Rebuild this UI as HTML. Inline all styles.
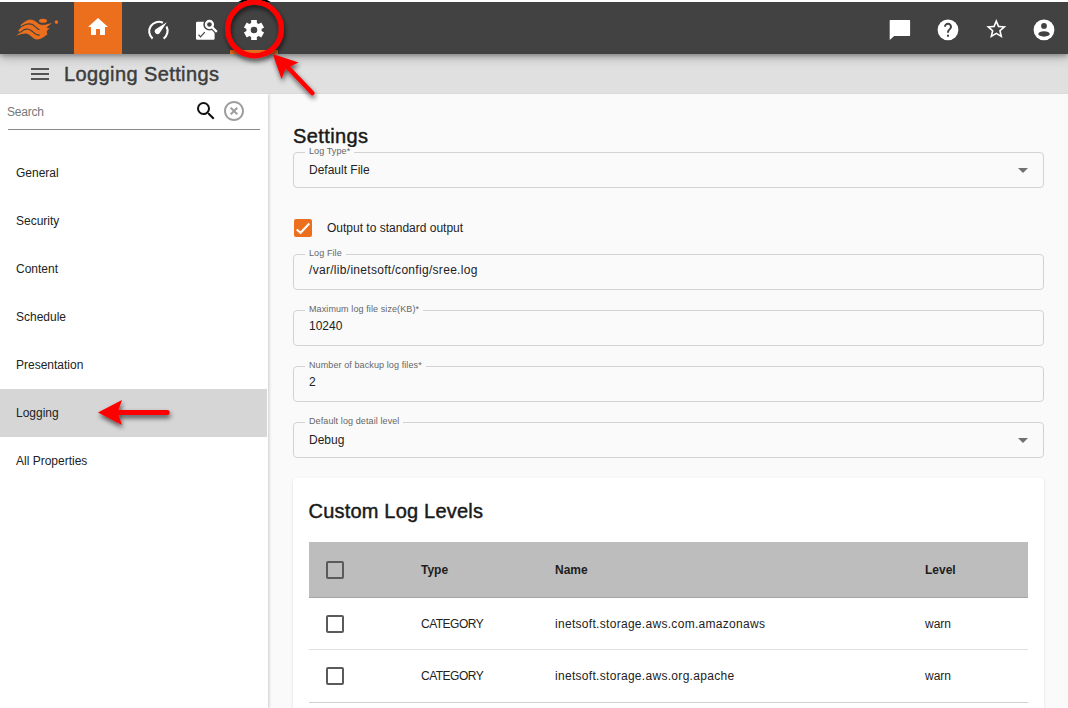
<!DOCTYPE html>
<html><head><meta charset="utf-8">
<style>
*{margin:0;padding:0;box-sizing:border-box}
html,body{width:1068px;height:708px;overflow:hidden;background:#fff;font-family:"Liberation Sans",sans-serif}
.abs{position:absolute}
#tb{position:absolute;left:0;top:2px;width:1068px;height:52px;background:#424242;z-index:3;box-shadow:0 2px 4px rgba(0,0,0,.25),0 4px 10px rgba(0,0,0,.22)}
#home{position:absolute;left:74px;top:0;width:48px;height:52px;background:#ec6f1d}
#ind{position:absolute;left:230px;top:48px;width:48px;height:4px;background:#ec6f1d}
#sub{position:absolute;left:0;top:54px;width:1068px;height:40px;background:#e0e0e0;z-index:2;border-bottom:1px solid #dadada}
#side{position:absolute;left:0;top:94px;width:268px;height:614px;background:#fff;z-index:1;box-shadow:1px 0 3px rgba(0,0,0,.2)}
#main{position:absolute;left:268px;top:94px;width:800px;height:614px;background:#fafafa}
.t{position:absolute;white-space:nowrap;line-height:1}
.item{position:absolute;left:16px;font-size:12px;color:#222}
.field{position:absolute;left:293px;width:751px;height:36px;border:1px solid #d2d2d2;border-radius:4px}
.lab{position:absolute;left:11px;top:-6px;padding:0 4px;background:#fafafa;font-size:9px;color:#666;line-height:1;letter-spacing:0.1px}
.val{position:absolute;left:15px;font-size:12px;color:#222;line-height:1}
.caret{position:absolute;left:724px;top:15px;width:0;height:0;border-left:5px solid transparent;border-right:5px solid transparent;border-top:5px solid #707070}
#card{position:absolute;left:293px;top:478px;width:751px;height:240px;background:#fff;border-radius:4px;box-shadow:0 1px 3px rgba(0,0,0,.12)}
.cb{position:absolute;width:18px;height:18px;border:2px solid #5a5a5a;border-radius:2px}
.th{position:absolute;font-size:12px;font-weight:bold;color:#1e1e1e;line-height:1}
.td{position:absolute;font-size:12px;color:#222;line-height:1}
</style></head><body>
<div id="tb">
  <svg class="abs" style="left:0;top:-2px" width="74" height="54" viewBox="0 0 74 54">
    <g fill="#ec6f1d">
      <ellipse cx="43" cy="20.7" rx="4.05" ry="2.05"/>
      <circle cx="56.4" cy="22.1" r="1.8"/>
      <path d="M20.24 25.36 C23 23 27 19.5 30.5 19.5 C33.5 19.5 36.5 21.8 39.1 24.1 L41.1 24.7 L45.1 24.7 L47.9 23.9 L52 23.1 L49.8 24.7 L47.1 27.1 L46.7 28 L49.8 28.2 L47.9 29.8 L46.7 31.4 L47.1 33.4 L47.5 34.2 C45 36 42 38.5 39 39.3 C37 39.8 35 39 33.8 38.4 C31 36.5 28.5 33.6 26 33.6 C22.5 33.6 19 35 16 35.8 C18 34.2 19.5 33 20.5 32.3 L18 30.7 C19.5 29 20.8 27.5 22 26.4 Z"/>
    </g>
    <g fill="none" stroke="#424242" stroke-linecap="round">
      <path stroke-width="1.15" d="M22 26.3 C24.5 24.6 26.8 23.9 28.7 23.9 C30.5 23.9 31.5 24.1 32.4 24.6 C33.8 25.4 35 26.6 36 27.4 C37.2 28.4 38 29.2 39 29.6"/>
      <path stroke-width="1.15" d="M20.6 32.2 C22.5 30.6 24 29.6 25 29.4 C26.5 29.1 27.8 29.1 28.7 29.3 C30 29.7 31.2 30.6 32.4 31.5 C33.6 32.5 34.8 33.6 36 34.3 C37.2 34.9 38.2 35.1 39.3 35.1"/>
      <path stroke-width="1.3" d="M39.3 23.4 C41 23.6 43 23.7 45.5 23.6"/>
    </g>
  </svg>
  <div id="home">
    <svg class="abs" style="left:12px;top:13px" width="24" height="24" viewBox="0 0 24 24"><path fill="#fff" d="M10 20v-6h4v6h5v-8h3L12 3 2 12h3v8z"/></svg>
  </div>
  <!-- speedometer -->
  <svg class="abs" style="left:134px;top:-2px" width="48" height="54" viewBox="134 0 48 54">
    <path fill="none" stroke="#fff" stroke-width="2.1" d="M152.6 38.6 A9.5 9.5 0 0 1 162.9 22.8"/>
    <path fill="none" stroke="#fff" stroke-width="2.1" d="M166.5 26.5 A9.5 9.5 0 0 1 163.6 38.6"/>
    <path fill="#fff" d="M166.8 22.3 L159.56 33.3 A2.8 2.8 0 0 1 155.64 29.3 Z"/>
  </svg>
  <!-- report -->
  <svg class="abs" style="left:182px;top:-2px" width="48" height="54" viewBox="182 0 48 54">
    <defs><mask id="rm"><rect x="182" y="0" width="48" height="54" fill="#fff"/><circle cx="209.45" cy="24.5" r="6.1" fill="#000"/><path d="M212.4 27.4 L216.5 31.5" stroke="#000" stroke-width="4.6"/></mask></defs>
    <rect x="196" y="21.8" width="18.6" height="18" rx="1.2" fill="#fff" mask="url(#rm)"/>
    <circle cx="209.45" cy="24.5" r="3.5" fill="none" stroke="#fff" stroke-width="2.3"/>
    <path d="M212 27 L216 31" stroke="#fff" stroke-width="2.3" stroke-linecap="square"/>
    <path d="M198.5 34.6 L200.5 36.8 L204.8 32.2" fill="none" stroke="#424242" stroke-width="1.2"/>
  </svg>
  <!-- gear -->
  <svg class="abs" style="left:230px;top:-2px" width="48" height="54" viewBox="230 0 48 54">
    <g transform="translate(254 30)">
      <path fill="#fff" fill-rule="evenodd" d="M-2.85 -7.05 L-2.85 -10.00 L2.85 -10.00 L2.85 -7.05 A7.6 7.6 0 0 1 4.68 -5.99 L7.24 -7.47 L10.09 -2.53 L7.53 -1.05 A7.6 7.6 0 0 1 7.53 1.05 L10.09 2.53 L7.24 7.47 L4.68 5.99 A7.6 7.6 0 0 1 2.85 7.05 L2.85 10.00 L-2.85 10.00 L-2.85 7.05 A7.6 7.6 0 0 1 -4.68 5.99 L-7.24 7.47 L-10.09 2.53 L-7.53 1.05 A7.6 7.6 0 0 1 -7.53 -1.05 L-10.09 -2.53 L-7.24 -7.47 L-4.68 -5.99 A7.6 7.6 0 0 1 -2.85 -7.05Z M3.3 0 A3.3 3.3 0 1 0 -3.3 0 A3.3 3.3 0 1 0 3.3 0Z"/>
    </g>
  </svg>
  <div id="ind"></div>
  <!-- right icons -->
  <svg class="abs" style="left:876px;top:-2px" width="192" height="54" viewBox="876 0 192 54">
    <path fill="#fff" d="M890.4 19.9 H909.4 Q910.1 19.9 910.1 20.6 V35.2 Q910.1 35.9 909.4 35.9 H894.2 L889.7 39.9 V20.6 Q889.7 19.9 890.4 19.9 Z"/>
    <circle cx="948" cy="29.8" r="10.4" fill="#fff"/>
    <path transform="translate(936 17.8)" fill="#424242" d="M13 19h-2v-2h2v2zm2.07-7.75l-.9.92C13.45 12.9 13 13.5 13 15h-2v-.5c0-1.1.45-2.1 1.17-2.83l1.24-1.26c.37-.36.59-.86.59-1.41 0-1.1-.9-2-2-2s-2 .9-2 2H8c0-2.21 1.79-4 4-4s4 1.79 4 4c0 .88-.36 1.68-.93 2.25z"/>
    <path transform="translate(984.3 17.1)" fill="#fff" d="M22 9.24l-7.19-.62L12 2 9.19 8.63 2 9.24l5.46 4.73L5.82 21 12 17.27 18.18 21l-1.63-7.03L22 9.24zM12 15.4l-3.76 2.27 1-4.28-3.32-2.88 4.38-.38L12 6.1l1.71 4.04 4.38.38-3.32 2.88 1 4.28L12 15.4z"/>
    <circle cx="1044" cy="29.8" r="10.4" fill="#fff"/>
    <circle cx="1044" cy="25.95" r="2.9" fill="#424242"/>
    <ellipse cx="1044" cy="33.9" rx="5.75" ry="2.75" fill="#424242"/>
  </svg>
</div>

<div class="abs" style="left:0;top:0;width:1068px;height:2px;background:#fff;z-index:5"></div>
<div id="sub">
  <svg class="abs" style="left:28px;top:8px" width="24" height="24" viewBox="0 0 24 24"><path fill="#555" d="M3 18h18v-2H3v2zm0-5h18v-2H3v2zm0-7v2h18V6H3z"/></svg>
  <div class="t" style="left:64px;top:10px;font-size:20px;color:#3d3d3d;letter-spacing:0.4px;-webkit-text-stroke:0.45px #3d3d3d">Logging Settings</div>
</div>

<div id="side">
  <div class="t" style="left:7px;top:12px;font-size:12px;letter-spacing:-0.2px;color:#777">Search</div>
  <svg class="abs" style="left:194px;top:5px" width="24" height="24" viewBox="0 0 24 24"><path fill="#111" d="M15.5 14h-.79l-.28-.27A6.471 6.471 0 0 0 16 9.5 6.5 6.5 0 1 0 9.5 16c1.61 0 3.09-.59 4.23-1.57l.27.28v.79l5 4.99L20.49 19l-4.99-5zm-6 0C7.01 14 5 11.99 5 9.5S7.01 5 9.5 5 14 7.01 14 9.5 11.99 14 9.5 14z"/></svg>
  <svg class="abs" style="left:222px;top:5px" width="24" height="24" viewBox="0 0 24 24"><path fill="#9e9e9e" d="M14.59 8L12 10.59 9.41 8 8 9.41 10.59 12 8 14.59 9.41 16 12 13.41 14.59 16 16 14.59 13.41 12 16 9.41 14.59 8zM12 2C6.47 2 2 6.47 2 12s4.47 10 10 10 10-4.47 10-10S17.53 2 12 2zm0 18c-4.41 0-8-3.59-8-8s3.59-8 8-8 8 3.59 8 8-3.59 8-8 8z"/></svg>
  <div class="abs" style="left:8px;top:35px;width:252px;height:1px;background:#8a8a8a"></div>
  <div class="abs" style="left:0;top:295px;width:267px;height:48px;background:#d6d6d6"></div>
  <div class="t item" style="top:73px">General</div>
  <div class="t item" style="top:121px">Security</div>
  <div class="t item" style="top:169px">Content</div>
  <div class="t item" style="top:217px">Schedule</div>
  <div class="t item" style="top:265px">Presentation</div>
  <div class="t item" style="top:313px">Logging</div>
  <div class="t item" style="top:361px">All Properties</div>
</div>

<div id="main"></div>

<div class="t" style="left:293px;top:126px;font-size:20px;color:#1a1a1a;letter-spacing:0.4px;-webkit-text-stroke:0.45px #1a1a1a">Settings</div>

<div class="field" style="top:152px"><div class="lab">Log Type*</div><div class="val" style="top:11px">Default File</div><div class="caret"></div></div>

<div class="abs" style="left:294px;top:219px;width:18px;height:18px;background:#ec6f1d;border-radius:2px">
  <svg class="abs" style="left:0;top:0" width="18" height="18" viewBox="0 0 18 18"><path d="M2.7 10.4 L6.6 13.8 L15.3 4.5" fill="none" stroke="#fff" stroke-width="2"/></svg>
</div>
<div class="t" style="left:327px;top:222px;font-size:12px;color:#222">Output to standard output</div>

<div class="field" style="top:254px"><div class="lab">Log File</div><div class="val" style="top:9px;letter-spacing:0.3px">/var/lib/inetsoft/config/sree.log</div></div>
<div class="field" style="top:310px"><div class="lab">Maximum log file size(KB)*</div><div class="val" style="top:9px">10240</div></div>
<div class="field" style="top:366px"><div class="lab">Number of backup log files*</div><div class="val" style="top:9px">2</div></div>
<div class="field" style="top:422px"><div class="lab">Default log detail level</div><div class="val" style="top:11px">Debug</div><div class="caret"></div></div>

<div id="card">
  <div class="t" style="left:15.5px;top:22.5px;font-size:20px;color:#1a1a1a;letter-spacing:0.2px;-webkit-text-stroke:0.45px #1a1a1a">Custom Log Levels</div>
  <div class="abs" style="left:16px;top:64px;width:719px;height:56px;background:#bdbdbd;border-bottom:1px solid #a5a5a5"></div>
  <div class="cb" style="left:33px;top:83px"></div>
  <div class="th" style="left:128px;top:86px">Type</div>
  <div class="th" style="left:262px;top:86px">Name</div>
  <div class="th" style="left:632px;top:86px">Level</div>
  <div class="cb" style="left:33px;top:137px"></div>
  <div class="td" style="left:128px;top:140px;letter-spacing:-0.5px">CATEGORY</div>
  <div class="td" style="left:262px;top:140px;letter-spacing:0.3px">inetsoft.storage.aws.com.amazonaws</div>
  <div class="td" style="left:632px;top:140px">warn</div>
  <div class="abs" style="left:16px;top:171px;width:719px;height:1px;background:#e0e0e0"></div>
  <div class="cb" style="left:33px;top:189px"></div>
  <div class="td" style="left:128px;top:192px;letter-spacing:-0.5px">CATEGORY</div>
  <div class="td" style="left:262px;top:192px;letter-spacing:0.3px">inetsoft.storage.aws.org.apache</div>
  <div class="td" style="left:632px;top:192px">warn</div>
  <div class="abs" style="left:16px;top:224px;width:719px;height:1px;background:#d0d0d0"></div>
</div>

<!-- annotations -->
<svg class="abs" style="left:0;top:0;z-index:10" width="1068" height="708" viewBox="0 0 1068 708">
  <defs><filter id="sh" x="-20%" y="-20%" width="140%" height="140%"><feGaussianBlur in="SourceAlpha" stdDeviation="2.4"/><feOffset dx="1" dy="2.5"/><feComponentTransfer><feFuncA type="linear" slope="0.65"/></feComponentTransfer><feMerge><feMergeNode/><feMergeNode in="SourceGraphic"/></feMerge></filter></defs>
  <clipPath id="strip"><rect x="0" y="0" width="1068" height="2"/></clipPath><circle clip-path="url(#strip)" cx="254.5" cy="29" r="30.3" fill="none" stroke="#000" stroke-width="2.4"/>
  <g filter="url(#sh)">
    <circle cx="254.5" cy="29" r="26.85" fill="none" stroke="#ff0000" stroke-width="5.3"/>
    <path d="M287 66.5 L312.3 93" stroke="#ff0000" stroke-width="4.6" stroke-linecap="round"/>
    <path d="M272.7 53.9 L298.6 62.4 L289 67 L285.5 68.5 L281.6 79.3 Z" fill="#ff0000"/>
    <path d="M117 412.5 L167.2 412.5" stroke="#ff0000" stroke-width="5" stroke-linecap="round"/>
    <path d="M98 412.5 L122 400.1 L117.6 412.5 L122 424.9 Z" fill="#ff0000"/>
  </g>
</svg>
</body></html>
